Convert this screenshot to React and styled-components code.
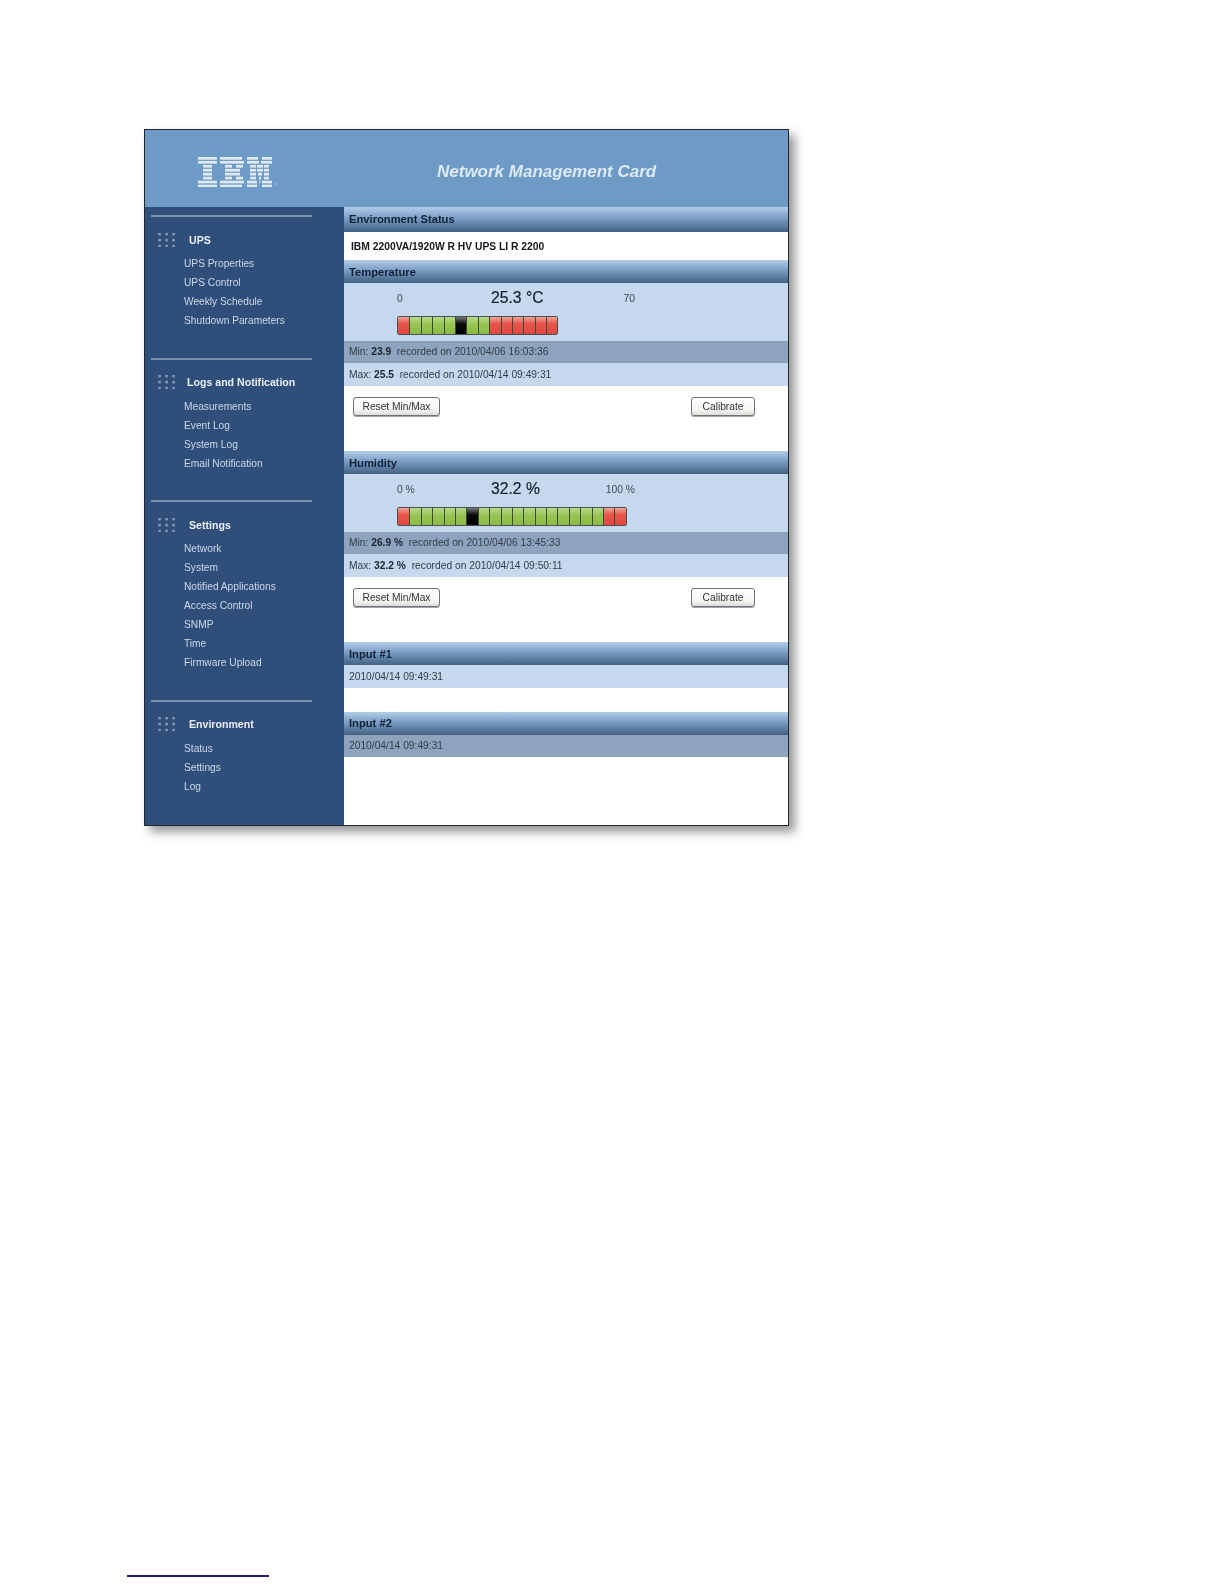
import React from 'react';

import styled, { createGlobalStyle } from 'styled-components';

const GlobalStyle = createGlobalStyle`
    html, body {
        margin: 0;
        padding: 0;
        background: #fff;
        font-family: "Liberation Sans", Arial, sans-serif;
    }
`;

const Page = styled.div`
    width: 1224px;
    height: 1584px;
    box-sizing: border-box;
    padding: 129px 0 0 127px;
    overflow: hidden;
`;

const Card = styled.div`
    width: 645px;
    height: 697px;
    margin-left: 17px;
    box-sizing: border-box;
    border: 1px solid #20262e;
    background: #fff;
    box-shadow: 6px 6px 9px rgba(50, 50, 50, 0.5);
    display: flex;
    flex-direction: column;
    filter: blur(0.5px);
`;

const Header = styled.div`
    height: 76.5px;
    flex: none;
    background: #6e9ac6;
    display: flex;
    align-items: center;
`;

const LogoCell = styled.div`
    width: 199px;
    flex: none;
    padding: 8px 0 0 53px;
    box-sizing: border-box;
    display: flex;
`;

const Title = styled.div`
    margin: 8px 0 0 93px;
    font-size: 17px;
    font-weight: bold;
    font-style: italic;
    color: #dce9f6;
`;

const Body = styled.div`
    flex: 1;
    display: flex;
    min-height: 0;
`;

const Sidebar = styled.nav`
    width: 199px;
    flex: none;
    box-sizing: border-box;
    background: #2f4e7a;
    padding: 8.5px 0 0 6px;
`;

const NavSection = styled.div`
    padding-bottom: 27.5px;
`;

const Divider = styled.div`
    width: 161px;
    height: 2px;
    background: #7c90ad;
`;

const NavHeading = styled.div`
    height: 19px;
    margin: 13px 0 5px 7px;
    display: flex;
    align-items: center;
    gap: ${(props) => props.$gap}px;
    font-size: 10.6px;
    font-weight: bold;
    color: #e8eef6;
    white-space: nowrap;
`;

const NavLink = styled.div`
    height: 19px;
    line-height: 19px;
    margin-left: 33px;
    font-size: 10.2px;
    color: #ccd8e8;
    white-space: nowrap;
`;

const Main = styled.main`
    flex: 1;
    min-width: 0;
    display: flex;
    flex-direction: column;
    background: #fff;
`;

const SectionHead = styled.div`
    height: ${(props) => props.$height || 23}px;
    flex: none;
    box-sizing: border-box;
    padding-left: 5px;
    display: flex;
    align-items: center;
    font-size: 11.2px;
    font-weight: bold;
    color: #0f2238;
    background: linear-gradient(#b2cde9 0%, #86a8cc 35%, #5f82a6 70%, #42627f 100%);
`;

const ModelRow = styled.div`
    height: 28px;
    flex: none;
    padding-left: 7px;
    display: flex;
    align-items: center;
    font-size: 10.3px;
    font-weight: bold;
    color: #14171c;
`;

const Gauge = styled.div`
    height: 57.5px;
    flex: none;
    box-sizing: border-box;
    padding: 4px 0 0 53px;
    background: #c5d8ee;
`;

const GaugeLabels = styled.div`
    display: grid;
    grid-template-columns: 94px 100px 44px;
    align-items: center;
    height: 22px;
    font-size: 10.3px;
    color: #3b4656;
`;

const GaugeValue = styled.div`
    font-size: 15.7px;
    color: #16202c;
    -webkit-text-stroke: 0.2px #16202c;
    white-space: nowrap;
`;

const GaugeMax = styled.div`
    text-align: right;
    white-space: nowrap;
`;

const Bar = styled.div`
    display: flex;
    width: max-content;
    height: 19px;
    margin-top: 7px;
    box-sizing: border-box;
    border: 1px solid #4a4f55;
    border-radius: 2px;
    overflow: hidden;
`;

const segmentFill = {
    red: 'linear-gradient(#f0a596 0%, #e8544a 40%, #e2483f 100%)',
    green: 'linear-gradient(#b9d98a 0%, #96c451 45%, #8dbb48 100%)',
    black: 'linear-gradient(#77797a 0%, #0b0b0b 40%, #000 100%)',
};

const Segment = styled.div`
    width: 11.4px;
    box-sizing: border-box;
    border-left: 1px solid #3f4a35;
    background: ${(props) => segmentFill[props.$kind]};

    &:first-child {
        border-left: none;
    }
`;

const InfoRow = styled.div`
    height: 22.5px;
    flex: none;
    padding-left: 5px;
    display: flex;
    align-items: center;
    font-size: 10.25px;
    color: #333c48;
    white-space: pre;
    background: ${(props) => (props.$dark ? '#8ea3bd' : '#c5d8ee')};

    b {
        color: #1b2430;
    }
`;

const ButtonRow = styled.div`
    height: 65.5px;
    flex: none;
    box-sizing: border-box;
    padding: 11.5px 33px 0 9px;
    display: flex;
    justify-content: space-between;
    align-items: flex-start;
`;

const Button = styled.button`
    width: ${(props) => props.$width}px;
    height: 19px;
    padding: 0;
    box-sizing: border-box;
    border: 1px solid #6f7377;
    border-radius: 3px;
    background: linear-gradient(#fff 0%, #f5f5f2 70%, #dcdcd8 100%);
    box-shadow: 0 1px 0 #a0a4a8;
    font-family: inherit;
    font-size: 10.2px;
    color: #333;
`;

const Spacer = styled.div`
    height: 24px;
    flex: none;
`;

const FootnoteRule = styled.div`
    width: 142px;
    height: 1.5px;
    margin-top: 749px;
    background: #1a1a8c;
`;

const DotGrid = () => (
    <svg width="17" height="14" viewBox="0 0 17 14">
        {[1, 7, 13].map((y) =>
            [1.5, 8.5, 15.5].map((x) => (
                <rect key={x + '-' + y} x={x - 1.2} y={y - 1.2} width="2.6" height="2.6" fill="#8298b6" />
            ))
        )}
    </svg>
);

// each row of the striped logo: start/end pairs on a 74 wide grid
const logoRows = [
    [[0, 19], [22, 44], [49, 60], [64, 74]],
    [[0, 19], [22, 46], [49, 61], [63, 74]],
    [[5, 14], [27, 34], [38, 45], [52, 58], [59, 62], [62, 65], [66, 71]],
    [[5, 14], [27, 42], [52, 58], [59, 65], [66, 71]],
    [[5, 14], [27, 42], [52, 58], [60, 64], [66, 71]],
    [[5, 14], [27, 34], [38, 45], [52, 58], [61, 63], [66, 71]],
    [[0, 19], [22, 46], [49, 59], [61.5, 62.5], [64, 74]],
    [[0, 19], [22, 44], [49, 59], [64, 74]],
];

const IbmLogo = () => (
    <svg width="80" height="30" viewBox="0 0 80 30">
        {logoRows.map((row, i) =>
            row.map(([from, to]) => (
                <rect key={i + '-' + from} x={from} y={i * 3.95} width={to - from} height="2.7" fill="#dfe9f4" />
            ))
        )}
        <circle cx="78" cy="27" r="1.3" fill="#8fb0d0" />
    </svg>
);

const navSections = [
    { title: 'UPS', gap: 14, links: ['UPS Properties', 'UPS Control', 'Weekly Schedule', 'Shutdown Parameters'] },
    { title: 'Logs and Notification', gap: 12, links: ['Measurements', 'Event Log', 'System Log', 'Email Notification'] },
    { title: 'Settings', gap: 14, links: ['Network', 'System', 'Notified Applications', 'Access Control', 'SNMP', 'Time', 'Firmware Upload'] },
    { title: 'Environment', gap: 14, links: ['Status', 'Settings', 'Log'] },
];

const buildSegments = (spec) =>
    spec.flatMap(([kind, count]) => Array.from({ length: count }, () => kind));

const GaugeBlock = ({ low, value, high, segments, min, minAt, max, maxAt }) => (
    <>
        <Gauge>
            <GaugeLabels>
                <div>{low}</div>
                <GaugeValue>{value}</GaugeValue>
                <GaugeMax>{high}</GaugeMax>
            </GaugeLabels>
            <Bar>
                {buildSegments(segments).map((kind, i) => (
                    <Segment key={i} $kind={kind} />
                ))}
            </Bar>
        </Gauge>
        <InfoRow $dark>Min: <b>{min}</b>  recorded on {minAt}</InfoRow>
        <InfoRow>Max: <b>{max}</b>  recorded on {maxAt}</InfoRow>
        <ButtonRow>
            <Button $width={87}>Reset Min/Max</Button>
            <Button $width={64}>Calibrate</Button>
        </ButtonRow>
    </>
);

const App = () => (
    <Page>
        <GlobalStyle />
        <Card>
            <Header>
                <LogoCell>
                    <IbmLogo />
                </LogoCell>
                <Title>Network Management Card</Title>
            </Header>
            <Body>
                <Sidebar>
                    {navSections.map((section) => (
                        <NavSection key={section.title}>
                            <Divider />
                            <NavHeading $gap={section.gap}>
                                <DotGrid />
                                {section.title}
                            </NavHeading>
                            {section.links.map((link) => (
                                <NavLink key={link}>{link}</NavLink>
                            ))}
                        </NavSection>
                    ))}
                </Sidebar>
                <Main>
                    <SectionHead $height={25.5}>Environment Status</SectionHead>
                    <ModelRow>IBM 2200VA/1920W R HV UPS LI R 2200</ModelRow>

                    <SectionHead>Temperature</SectionHead>
                    <GaugeBlock
                        low="0"
                        value="25.3 °C"
                        high="70"
                        segments={[['red', 1], ['green', 4], ['black', 1], ['green', 2], ['red', 6]]}
                        min="23.9"
                        minAt="2010/04/06 16:03:36"
                        max="25.5"
                        maxAt="2010/04/14 09:49:31"
                    />

                    <SectionHead>Humidity</SectionHead>
                    <GaugeBlock
                        low="0 %"
                        value="32.2 %"
                        high="100 %"
                        segments={[['red', 1], ['green', 5], ['black', 1], ['green', 11], ['red', 2]]}
                        min="26.9 %"
                        minAt="2010/04/06 13:45:33"
                        max="32.2 %"
                        maxAt="2010/04/14 09:50:11"
                    />

                    <SectionHead>Input #1</SectionHead>
                    <InfoRow>2010/04/14 09:49:31</InfoRow>
                    <Spacer />

                    <SectionHead>Input #2</SectionHead>
                    <InfoRow $dark>2010/04/14 09:49:31</InfoRow>
                </Main>
            </Body>
        </Card>
        <FootnoteRule />
    </Page>
);

export default App;
